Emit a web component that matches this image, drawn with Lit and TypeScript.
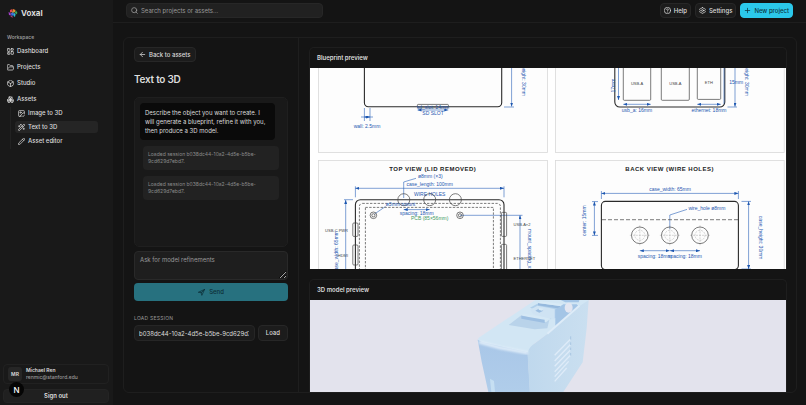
import { LitElement, html, svg, css } from "lit";
import { customElement, property, state } from "lit/decorators.js";
import { classMap } from "lit/directives/class-map.js";

const ICONS: Record<string, unknown> = {
  dashboard: svg`<rect x="3" y="3" width="7" height="9" rx="1"/><rect x="14" y="3" width="7" height="5" rx="1"/><rect x="14" y="12" width="7" height="9" rx="1"/><rect x="3" y="16" width="7" height="5" rx="1"/>`,
  folder: svg`<path d="m6 14 1.5-2.9A2 2 0 0 1 9.24 10H20a2 2 0 0 1 1.94 2.5l-1.54 6a2 2 0 0 1-1.95 1.5H4a2 2 0 0 1-2-2V5a2 2 0 0 1 2-2h3.9a2 2 0 0 1 1.69.9l.81 1.2a2 2 0 0 0 1.67.9H18a2 2 0 0 1 2 2v2"/>`,
  box: svg`<path d="M21 8a2 2 0 0 0-1-1.73l-7-4a2 2 0 0 0-2 0l-7 4A2 2 0 0 0 3 8v8a2 2 0 0 0 1 1.73l7 4a2 2 0 0 0 2 0l7-4A2 2 0 0 0 21 16Z"/><path d="m3.3 7 8.7 5 8.7-5"/><path d="M12 22V12"/>`,
  boxes: svg`<path d="M2.97 12.92A2 2 0 0 0 2 14.63v3.24a2 2 0 0 0 .97 1.71l3 1.8a2 2 0 0 0 2.06 0L12 19v-5.5l-5-3-4.03 2.42Z"/><path d="m7 16.5-4.74-2.85"/><path d="m7 16.5 5-3"/><path d="M7 16.5v5.17"/><path d="M12 13.5V19l3.97 2.38a2 2 0 0 0 2.06 0l3-1.8a2 2 0 0 0 .97-1.71v-3.24a2 2 0 0 0-.97-1.71L17 10.5l-5 3Z"/><path d="m17 16.5-5-3"/><path d="m17 16.5 4.74-2.85"/><path d="M17 16.5v5.17"/><path d="M7.97 4.42A2 2 0 0 0 7 6.13v4.37l5 3 5-3V6.13a2 2 0 0 0-.97-1.71l-3-1.8a2 2 0 0 0-2.06 0l-3 1.8Z"/><path d="M12 8 7.26 5.15"/><path d="m12 8 4.74-2.85"/><path d="M12 13.5V8"/>`,
  image: svg`<path d="M21 11V5a2 2 0 0 0-2-2H5a2 2 0 0 0-2 2v14a2 2 0 0 0 2 2h6"/><circle cx="9" cy="9" r="2"/><path d="m21 11-4-1-11 11"/><path d="M14 19l3 3 5-6"/>`,
  wand: svg`<path d="m21.64 3.64-1.28-1.28a1.2 1.2 0 0 0-1.72 0L2.36 18.64a1.2 1.2 0 0 0 0 1.72l1.28 1.28a1.2 1.2 0 0 0 1.72 0L21.64 5.36a1.2 1.2 0 0 0 0-1.72"/><path d="m14 7 3 3"/><path d="M5 6v4"/><path d="M19 14v4"/><path d="M10 2v2"/><path d="M7 8H3"/><path d="M21 16h-4"/><path d="M11 3H9"/>`,
  pencil: svg`<path d="M21.17 6.81a1 1 0 0 0-3.98-3.98L3.84 16.17a2 2 0 0 0-.5.83l-1.32 4.35a.5.5 0 0 0 .62.62l4.35-1.32a2 2 0 0 0 .83-.5z"/><path d="m15 5 4 4"/>`,
  search: svg`<circle cx="11" cy="11" r="8"/><path d="m21 21-4.3-4.3"/>`,
  help: svg`<circle cx="12" cy="12" r="10"/><path d="M9.09 9a3 3 0 0 1 5.83 1c0 2-3 3-3 3"/><path d="M12 17h.01"/>`,
  settings: svg`<path d="M12.22 2h-.44a2 2 0 0 0-2 2v.18a2 2 0 0 1-1 1.73l-.43.25a2 2 0 0 1-2 0l-.15-.08a2 2 0 0 0-2.73.73l-.22.38a2 2 0 0 0 .73 2.73l.15.1a2 2 0 0 1 1 1.72v.51a2 2 0 0 1-1 1.74l-.15.09a2 2 0 0 0-.73 2.73l.22.38a2 2 0 0 0 2.73.73l.15-.08a2 2 0 0 1 2 0l.43.25a2 2 0 0 1 1 1.73V20a2 2 0 0 0 2 2h.44a2 2 0 0 0 2-2v-.18a2 2 0 0 1 1-1.73l.43-.25a2 2 0 0 1 2 0l.15.08a2 2 0 0 0 2.73-.73l.22-.39a2 2 0 0 0-.73-2.73l-.15-.08a2 2 0 0 1-1-1.74v-.5a2 2 0 0 1 1-1.74l.15-.09a2 2 0 0 0 .73-2.73l-.22-.38a2 2 0 0 0-2.73-.73l-.15.08a2 2 0 0 1-2 0l-.43-.25a2 2 0 0 1-1-1.73V4a2 2 0 0 0-2-2z"/><circle cx="12" cy="12" r="3"/>`,
  plus: svg`<path d="M5 12h14"/><path d="M12 5v14"/>`,
  back: svg`<path d="m12 19-7-7 7-7"/><path d="M19 12H5"/>`,
  send: svg`<path d="M3 11 22 2 13 21l-2-8z"/><path d="M22 2 11 13"/>`,
};

@customElement("ui-icon")
export class UiIcon extends LitElement {
  @property() name = "";
  static styles = css`
    :host { display: inline-flex; flex: none; width: 7px; height: 7px; }
    svg { width: 100%; height: 100%; fill: none; stroke: currentColor; stroke-width: 2.3; stroke-linecap: round; stroke-linejoin: round; }
  `;
  render() {
    return html`<svg viewBox="1 1 22 22" aria-hidden="true">${ICONS[this.name]}</svg>`;
  }
}

/* One dimension line with an arrow head at each end. */
const dim = (x1: number, y1: number, x2: number, y2: number) =>
  svg`<line class="dim" x1=${x1} y1=${y1} x2=${x2} y2=${y2} marker-start="url(#arrow)" marker-end="url(#arrow)"/>`;
const label = (x: number, y: number, text: string, kind = "", turn = 0) =>
  svg`<text class=${"t " + kind} x=${x} y=${y} transform=${`rotate(${turn} ${x} ${y})`}>${text}</text>`;

@customElement("blueprint-drawing")
export class BlueprintDrawing extends LitElement {
  static styles = css`
    :host { display: block; }
    svg { display: block; width: 100%; background: #fff; font-family: "Liberation Sans", Arial, sans-serif; }
    .sheet { fill: #fdfdfd; stroke: #d9d9d9; stroke-width: 0.8; }
    .case { fill: none; stroke: #2a2a2a; stroke-width: 1.1; }
    .part { fill: none; stroke: #444; stroke-width: 0.7; }
    .dash { fill: none; stroke: #444; stroke-width: 0.7; stroke-dasharray: 2.4 1.4; }
    .long { stroke-dasharray: 4 2; }
    .cross { fill: none; stroke: #999; stroke-width: 0.4; stroke-dasharray: 2 1; }
    .dim, .lead { fill: none; stroke: #2a62b8; stroke-width: 0.6; }
    .head { fill: #1d57b0; }
    .t { font-size: 5px; fill: #1d57b0; text-anchor: middle; }
    .start { text-anchor: start; }
    .end { text-anchor: end; }
    .small { font-size: 4px; fill: #444; }
    .green { fill: #3f9a63; }
    .title { font-size: 6px; font-weight: 700; fill: #222; letter-spacing: 0.08em; }
  `;
  render() {
    return html`<svg viewBox="310 68 476 201" role="img" aria-label="Blueprint">
      <defs>
        <marker id="arrow" viewBox="0 0 8 6" refX="8" refY="3" markerWidth="4" markerHeight="3" markerUnits="userSpaceOnUse" orient="auto-start-reverse">
          <path class="head" d="M0 0 8 3 0 6z"/>
        </marker>
      </defs>

      <rect class="sheet" x="318.5" y="40" width="229" height="112.5"/>
      <rect class="case" x="364.4" y="40" width="137.3" height="66.8" rx="4"/>
      <rect class="part" x="417.4" y="104.4" width="31" height="3.4" rx="0.8"/>
      ${dim(417.5, 110, 448.3, 110)}
      ${label(433, 109.4, "sd_slot: 14mm")}
      ${label(433, 115.2, "SD SLOT")}
      <path class="lead" d="M364.4 108v13M370 108v13M361 117h12M504 107h10"/>
      ${dim(364.4, 117, 370, 117)}
      ${label(367, 127.6, "wall: 2.5mm")}
      ${dim(511.6, 40, 511.6, 106.5)}
      ${label(521.6, 96, "case_height: 30mm", "end", 90)}

      <rect class="sheet" x="555.5" y="40" width="228.7" height="112.5"/>
      <rect class="case" x="614.8" y="40" width="110" height="67" rx="5"/>
      <rect class="part" x="623.3" y="50" width="27.4" height="50.3" rx="1"/>
      <rect class="part" x="661.3" y="50" width="28" height="50.3" rx="1"/>
      <rect class="part" x="697.3" y="50" width="23.4" height="49.4" rx="1"/>
      ${label(637, 85.4, "USB-A", "small")}
      ${label(675.4, 85.4, "USB-A", "small")}
      ${label(708.8, 84, "ETH", "small")}
      ${dim(618.5, 50, 618.5, 100)}
      ${label(615, 85.5, "17mm", "", -90)}
      ${dim(623.3, 104.3, 650.7, 104.3)}
      ${label(637, 111.8, "usb_a: 16mm")}
      ${dim(697.3, 104.3, 720.7, 104.3)}
      ${label(709, 111.8, "ethernet: 18mm")}
      ${dim(735, 40, 735, 106.7)}
      <path class="lead" d="M727.5 107h9.5M724 68v36"/>
      ${label(736.2, 84, "15mm")}
      ${label(745, 95.8, "case_height: 30mm", "end", 90)}

      <rect class="sheet" x="318.5" y="160.5" width="229" height="130"/>
      ${label(432.8, 171, "TOP VIEW (LID REMOVED)", "title")}
      ${label(418, 178.3, "ø8mm (×3)", "start")}
      <path class="lead" d="M416 178.3 403.7 182v16M355.4 186.3v11M504 186.3v11M344 199.7h9M374.5 214 385.5 206.5M460 215.3h62.5"/>
      ${label(429.7, 185.7, "case_length: 100mm")}
      ${dim(355.4, 188.3, 504, 188.3)}
      ${label(429.7, 195.9, "WIRE HOLES")}
      <rect class="case" x="355.4" y="199.7" width="148.6" height="90" rx="5"/>
      <rect class="dash" x="359.4" y="203.4" width="141" height="90" rx="3"/>
      <rect class="dash" x="365.4" y="207.4" width="128" height="90"/>
      ${[403.8, 429.7, 455.4].map((x) => svg`<circle class="part" cx=${x} cy="199.7" r="6"/>`)}
      ${[373.4, 460].map((x) => svg`<circle class="part" cx=${x} cy="215.3" r="3.3"/><circle class="part" cx=${x} cy="215.3" r="1.6"/>`)}
      ${label(385.8, 205.8, "ø3mm mount", "start")}
      ${dim(403.7, 209.6, 429.7, 209.6)}
      ${label(416.7, 215.4, "spacing: 18mm")}
      ${label(429.7, 219.5, "PCB (85×56mm)", "green")}
      <rect class="part" x="352.8" y="223" width="5.2" height="13.4" rx="1"/>
      <rect class="part" x="352.8" y="245" width="5.2" height="20" rx="1"/>
      <rect class="part" x="501.4" y="212.4" width="5.2" height="24" rx="1"/>
      <rect class="part" x="501.4" y="244.4" width="5.2" height="30" rx="1"/>
      ${label(348, 231.6, "USB-C PWR", "small end")}
      ${label(348, 256.6, "HDMI", "small end")}
      ${label(513.6, 226, "USB-A×2", "small start")}
      ${label(513.6, 260, "ETHERNET", "small start")}
      ${dim(345.7, 200, 345.7, 290)}
      ${label(338.2, 231, "case_width: 65mm", "end", -90)}
      ${dim(520, 215.3, 520, 290)}
      ${label(528, 229, "mount_spacing_x: 58mm", "start", 90)}

      <rect class="sheet" x="555.5" y="160.5" width="228.7" height="130"/>
      ${label(669.6, 171, "BACK VIEW (WIRE HOLES)", "title")}
      ${label(670, 191.2, "case_width: 65mm")}
      ${dim(601.4, 193.4, 738.4, 193.4)}
      <path class="lead" d="M601.4 191v8M738.4 191v8M592 201.6h6M592 235.4h6M741.5 201.4h9.5M741.5 269h9.5M687 209.4 669.8 215v14"/>
      <rect class="case" x="601.4" y="201.4" width="137" height="68.2" rx="4"/>
      <path class="dash long" d="M602 219.7h136"/>
      ${[639.8, 669.8, 700].map(
        (x) => svg`<path class="cross" d=${`M${x - 10} 235.3h20M${x} 225.3v20`}/><circle class="cross" cx=${x} cy="235.3" r="5"/><circle class="part" cx=${x} cy="235.3" r="8.3"/>`,
      )}
      ${label(688.4, 210, "wire_hole ø8mm", "start")}
      ${dim(639.8, 250.7, 669.6, 250.7)}
      ${dim(670, 250.7, 700, 250.7)}
      ${label(654.7, 257.6, "spacing: 18mm")}
      ${label(685, 257.6, "spacing: 18mm")}
      ${dim(594.4, 201.6, 594.4, 235.4)}
      ${label(586.4, 220.7, "center: 15mm", "", -90)}
      ${dim(748.6, 201.4, 748.6, 269)}
      ${label(758.6, 237.7, "case_height: 30mm", "", 90)}
    </svg>`;
  }
}

@customElement("model-view")
export class ModelView extends LitElement {
  static styles = css`
    :host { display: block; background: #e3e3ed; }
    svg { display: block; width: 100%; height: 100%; }
  `;
  render() {
    return html`<svg viewBox="30 105 1428 276" preserveAspectRatio="xMidYMin slice" role="img" aria-label="3D model">
      <defs>
        <linearGradient id="front" x1="0" y1="0" x2="0" y2="1">
          <stop offset="0" stop-color="#a9c7e8"/><stop offset="1" stop-color="#b0cdea"/>
        </linearGradient>
        <linearGradient id="side" x1="0" y1="0" x2="1" y2="0">
          <stop offset="0" stop-color="#bfd8ed"/><stop offset="1" stop-color="#cadff0"/>
        </linearGradient>
        <filter id="soft"><feGaussianBlur stdDeviation="3"/></filter>
      </defs>
      <path fill="#d2e6f4" d="M536 218 706 105H866L842 126 742 207 700 238 684 264 610 252 533 226z"/>
      <path fill="url(#front)" d="M533 224 548 232 683 262 690 381H565L545 290z"/>
      <path fill="url(#side)" d="M683 270C684 250 694 242 706 234L742 207 838 124 866 105 860 190 848 292 790 381H689z"/>
      <path d="M537 231 600 248 684 264" stroke="#e1eef9" stroke-width="9" fill="none" filter="url(#soft)"/>
      <path fill="#b9d3ea" d="M626 180 664 151 738 172 748 164 742 190 704 193z"/>
      <path fill="#d5e8f5" d="M664 150 672 146 748 160 735 170z"/>
      <path fill="#9dbfe2" d="M664 152 734 164V174L664 161z"/>
      <path fill="#b0cfea" d="M690 128 712 116 780 130 770 138V158L752 163 740 146z"/>
      <path fill="#cfe3f3" d="M690 134 712 122 764 132V164L700 148z"/>
      <path fill="#96b9dd" d="M714 114 780 123V131L714 121z"/>
      <path fill="#d8eaf6" d="M714 114 722 109 790 117 780 123z"/>
      <path fill="#9dbfe2" d="M706 137 716 131 730 137 718 143z"/>
      <path fill="#d8eaf6" d="M716 128 730 131 726 137 716 134z"/>
      <path fill="#a4c5e6" d="M766 134 790 118 830 118 836 124 766 186z"/>
      <path fill="#a4c5e6" d="M782 105H838L836 112 796 112z"/>
      <ellipse cx="806" cy="128" rx="12" ry="15" fill="#e3e6f1"/>
      <path d="M742 206 838 122" stroke="#deecf8" stroke-width="6" fill="none"/>
      <path d="M764 271 812 222M764 288 812 238M764 304 812 254M764 320 812 270M764 335 806 289M764 349 800 309" stroke="#deebf8" stroke-width="4" fill="none"/>
      <path d="M812 214v10M812 232v8M812 248v8M812 264v8" stroke="#a9c6e2" stroke-width="3"/>
      <path fill="#c6dff2" d="M570 341 582 348 585 381H574z"/>
    </svg>`;
  }
}

@customElement("app-root")
export class AppRoot extends LitElement {
  @state() private session = "b038dc44-10a2-4d5e-b5be-9cd629d7ebd7";
  @state() private current = "Text to 3D";

  private main = [
    ["dashboard", "Dashboard"],
    ["folder", "Projects"],
    ["box", "Studio"],
    ["boxes", "Assets"],
  ];
  private sub = [
    ["image", "Image to 3D"],
    ["wand", "Text to 3D"],
    ["pencil", "Asset editor"],
  ];

  static styles = css`
    :host {
      display: grid; grid-template-columns: 113px minmax(0, 1fr); height: 100vh; overflow: hidden;
      background: #141414; color: #dcdcdc; color-scheme: dark;
      font: 500 6px/8px Inter, "Liberation Sans", sans-serif;
    }
    * { box-sizing: border-box; }
    button, input, textarea { font: inherit; color: inherit; margin: 0; }
    a { color: inherit; text-decoration: none; }
    ul { list-style: none; margin: 0; padding: 0; }
    h1, h2, p { margin: 0; }

    .sidebar { display: flex; flex-direction: column; background: #191919; padding: 7px 4px 2px 3px; position: relative; }
    .brand { display: flex; align-items: center; gap: 3px; padding: 0 5px; font-size: 8px; line-height: 12px; font-weight: 700; }
    .brand svg { width: 10px; height: 10px; }
    .group { padding: 14px 4px 2px; font-size: 5px; color: #a3a3a3; }
    .link { display: flex; align-items: center; gap: 3px; height: 16px; padding: 0 4px; }
    .subs { margin: 0 11px 0 7px; padding-left: 4px; border-left: 1px solid #222; }
    .sublink { display: flex; align-items: center; gap: 3px; height: 12px; margin-bottom: 2px; padding: 0 3px; border-radius: 3px; }
    .sublink.on { background: #252525; }
    .user { display: flex; align-items: center; gap: 4px; margin-top: auto; height: 20px; padding: 0 4px; border: 1px solid #212121; border-radius: 4px; }
    .avatar { display: grid; place-items: center; width: 14px; height: 14px; border-radius: 3px; background: #262626; font-size: 5px; font-weight: 600; }
    .who { display: grid; font-size: 5px; line-height: 7px; font-weight: 600; }
    .mail { color: #999; font-weight: 500; }
    .signout { margin-top: 5px; height: 14px; border: 1px solid #242424; border-radius: 4px; background: #202020; font-weight: 600; }
    .badge { position: absolute; left: 9px; bottom: 8px; width: 15px; height: 15px; border-radius: 50%; background: #050505; display: grid; place-items: center; font-size: 8px; color: #fff; }

    .page { display: flex; flex-direction: column; min-width: 0; min-height: 0; }
    .top { display: flex; align-items: center; gap: 4px; height: 23px; padding: 0 13px 1px; border-bottom: 1px solid #1e1e1e; }
    .search { display: flex; align-items: center; gap: 3px; flex: 0 1 197px; height: 15px; margin-right: auto; padding: 0 4px; border: 1px solid #272727; border-radius: 4px; background: #212121; color: #a3a3a3; }
    .search input { flex: 1; min-width: 0; padding: 0; border: 0; background: none; outline: none; font-weight: 400; }
    ::placeholder { color: #999; opacity: 1; }
    .btn { display: inline-flex; align-items: center; justify-content: center; gap: 3px; height: 15px; padding: 0 4px; border: 1px solid #272727; border-radius: 4px; background: #1c1c1c; white-space: nowrap; }
    .top .btn { padding: 0 3px; }
    .btn.primary { border-color: #2bc8ea; background: #2bc8ea; color: #0d3440; }

    .card { display: grid; grid-template-columns: 175px minmax(0, 1fr); flex: 1; min-height: 0; margin: 14px 9px 12px 10px; border: 1px solid #1e1e1e; border-radius: 6px; overflow: hidden; }
    .left { display: flex; flex-direction: column; padding: 9px 10px; border-right: 1px solid #1e1e1e; }
    .left > .btn { align-self: flex-start; }
    .left h1 { margin: 10px 0; font-size: 10px; line-height: 15px; font-weight: 600; letter-spacing: -0.025em; }
    .chat { display: flex; flex-direction: column; gap: 6px; height: 150px; padding: 5px 8px 5px 5px; border: 1px solid #1f1f1f; border-radius: 5px; background: #191919; }
    .msg { padding: 5px; border-radius: 4px; background: #0a0a0a; font-weight: 400; line-height: 9px; margin-right: 4px; }
    .msg.note { margin: 0 0 0 3px; background: #222; color: #8b8b8b; font-size: 5px; line-height: 7px; }
    .refine { height: 29px; margin-top: 4px; padding: 4px 5px; border: 1px solid #292929; border-radius: 4px; background: #1e1e1e; resize: vertical; outline: none; font-weight: 400; }
    .send { height: 18px; margin-top: 3px; border: 0; border-radius: 4px; background: #27717f; color: #0d2f37; display: flex; align-items: center; justify-content: center; gap: 4px; }
    .caption { margin: 13px 0 3px; font-size: 5px; font-weight: 400; letter-spacing: 0.05em; color: #999; }
    .load { display: flex; gap: 3px; }
    .load input { flex: 1; min-width: 0; height: 16px; padding: 0 5px 0 4px; border: 1px solid #262626; border-radius: 4px; background: #1c1c1c; outline: none; font-weight: 400; }
    .load .btn { height: 16px; padding: 0 7px; }

    .right { display: flex; flex-direction: column; gap: 10px; min-height: 0; padding: 9px 9px 0 10px; overflow: hidden; }
    .panel { border: 1px solid #1e1e1e; border-bottom: 0; border-radius: 5px 5px 0 0; }
    .panel h2 { padding: 6px 7px; font-size: 6px; line-height: 8px; font-weight: 600; }
    .panel.grow { display: flex; flex-direction: column; flex: 1; min-height: 0; }
    .panel model-view { flex: 1; min-height: 0; }
  `;

  render() {
    return html`
      <nav class="sidebar">
        <a class="brand" href="#">
          <svg viewBox="0 0 20 20" aria-hidden="true">
            <path fill="#e5484d" d="M4 4 9 2v6L4 9z"/><path fill="#e88a2c" d="M10 2l5 2-1 5-4-2z"/>
            <path fill="#3fae5a" d="M16 5l3 5-3 3-2-4z"/><path fill="#a23fc9" d="M1 8l4 2 1 5-4-1z"/>
            <path fill="#3f6fe0" d="M6 10l5-2 1 6-5 2z"/><path fill="#2fb8d0" d="M12 9l3 4-1 5-3-2z"/>
            <path fill="#d9468f" d="M5 16l4 1 1 2-4-1z"/><path fill="#d7c93a" d="M9 5l3 3-3 2z"/>
          </svg>
          Voxal
        </a>
        <div class="group">Workspace</div>
        <ul>${this.main.map(([icon, name]) => html`<li><a class="link" href="#"><ui-icon name=${icon}></ui-icon>${name}</a></li>`)}</ul>
        <ul class="subs">
          ${this.sub.map(
            ([icon, name]) => html`<li>
              <a href="#" class=${classMap({ sublink: true, on: name === this.current })} @click=${() => (this.current = name)}><ui-icon name=${icon}></ui-icon>${name}</a>
            </li>`,
          )}
        </ul>
        <div class="user">
          <div class="avatar">MR</div>
          <div class="who"><span>Michael Ren</span><span class="mail">renmic@stanford.edu</span></div>
        </div>
        <button class="signout">Sign out</button>
        <div class="badge">N</div>
      </nav>
      <div class="page">
        <header class="top">
          <label class="search"><ui-icon name="search"></ui-icon><input type="text" aria-label="Search" placeholder="Search projects or assets..." /></label>
          <button class="btn"><ui-icon name="help"></ui-icon>Help</button>
          <button class="btn"><ui-icon name="settings"></ui-icon>Settings</button>
          <button class="btn primary"><ui-icon name="plus"></ui-icon>New project</button>
        </header>
        <main class="card">
          <section class="left">
            <a class="btn" href="#"><ui-icon name="back"></ui-icon>Back to assets</a>
            <h1>Text to 3D</h1>
            <div class="chat">
              <p class="msg">Describe the object you want to create. I will generate a blueprint, refine it with you, then produce a 3D model.</p>
              ${[1, 2].map(() => html`<p class="msg note">${`Loaded session ${this.session}.`}</p>`)}
            </div>
            <textarea class="refine" aria-label="Model refinements" placeholder="Ask for model refinements"></textarea>
            <button class="send"><ui-icon name="send"></ui-icon>Send</button>
            <label class="caption" for="session">LOAD SESSION</label>
            <div class="load">
              <input id="session" type="text" .value=${this.session} />
              <button class="btn">Load</button>
            </div>
          </section>
          <section class="right">
            <div class="panel"><h2>Blueprint preview</h2><blueprint-drawing></blueprint-drawing></div>
            <div class="panel grow"><h2>3D model preview</h2><model-view></model-view></div>
          </section>
        </main>
      </div>
    `;
  }
}
